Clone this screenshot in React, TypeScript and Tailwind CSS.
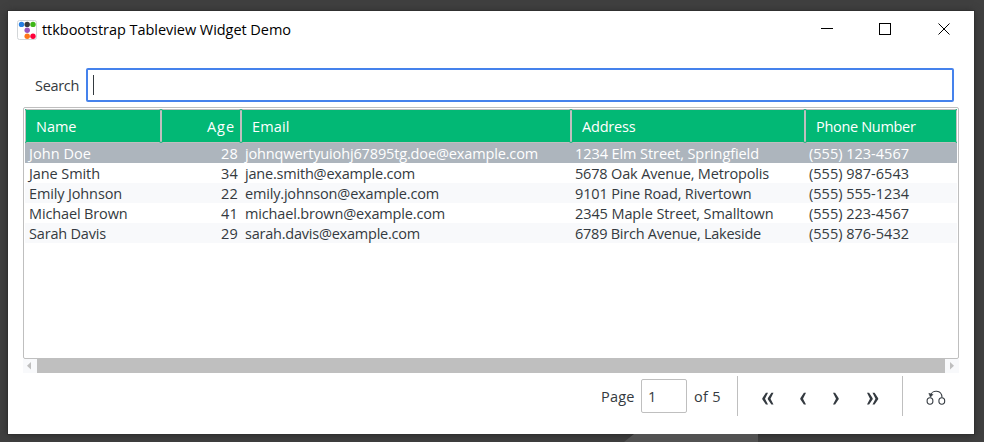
import { useLayoutEffect, useRef, useState } from "react";

type TextProps = { children: string; width: number; className?: string };

// Text tracked so that its advance fills the given width.
function Label({ children, width, className = "" }: TextProps) {
  const ref = useRef<HTMLSpanElement>(null);
  const [spacing, setSpacing] = useState(0);
  useLayoutEffect(() => {
    if (ref.current) {
      const natural = ref.current.getBoundingClientRect().width;
      setSpacing((width - natural) / children.length);
    }
  }, [children, width]);
  return (
    <span ref={ref} className={`inline-block whitespace-pre ${className}`} style={{ letterSpacing: spacing }}>
      {children}
    </span>
  );
}

type Cell = [string, number];

const rows: Cell[][] = [
  [["John Doe", 62], ["28", 17], ["johnqwertyuiohj67895tg.doe@example.com", 293], ["1234 Elm Street, Springfield", 184], ["(555) 123-4567", 100]],
  [["Jane Smith", 71], ["34", 17], ["jane.smith@example.com", 170], ["5678 Oak Avenue, Metropolis", 194], ["(555) 987-6543", 100]],
  [["Emily Johnson", 93], ["22", 17], ["emily.johnson@example.com", 194], ["9101 Pine Road, Rivertown", 176.5], ["(555) 555-1234", 100]],
  [["Michael Brown", 98.5], ["41", 17], ["michael.brown@example.com", 200], ["2345 Maple Street, Smalltown", 198.5], ["(555) 223-4567", 100]],
  [["Sarah Davis", 77], ["29", 17], ["sarah.davis@example.com", 175], ["6789 Birch Avenue, Lakeside", 186], ["(555) 876-5432", 100]],
];

const headers: Cell[] = [["Name", 40.5], ["Age", 28], ["Email", 37.5], ["Address", 53.5], ["Phone Number", 99.5]];

const columns = "grid grid-cols-[136px_80px_330px_234px_152px]";

function AppIcon() {
  return (
    <svg width="20" height="20" viewBox="0 0 20 20">
      <rect x="0.5" y="0.5" width="19" height="19" rx="2" fill="#fff" stroke="#d3d6d8" />
      <circle cx="4.5" cy="4.4" r="2.7" fill="#2780e3" />
      <circle cx="10.2" cy="4.4" r="2.7" fill="#373a3c" />
      <circle cx="16" cy="4.4" r="2.7" fill="#3fb618" />
      <circle cx="10.2" cy="10.3" r="2.7" fill="#9954bb" />
      <circle cx="10.2" cy="16.2" r="2.7" fill="#ff7518" />
      <circle cx="16" cy="16.2" r="2.7" fill="#ff0039" />
    </svg>
  );
}

function Chevron({ kind }: { kind: "first" | "prev" | "next" | "last" }) {
  const left = "M3.9 0.8 H6 L3 6.7 L6 12.6 H3.9 L0.3 7.2 V6.2 Z";
  const right = "M2.1 0.8 H0 L3 6.7 L0 12.6 H2.1 L5.7 7.2 V6.2 Z";
  const d = kind === "first" || kind === "prev" ? left : right;
  const twice = kind === "first" || kind === "last";
  return (
    <svg width={twice ? 12 : 6} height="13" viewBox={twice ? "0 0 12 13" : "0 0 6 13"} fill="#343a40">
      <path d={d} />
      {twice && <path d={d} transform="translate(5.5 0)" />}
    </svg>
  );
}

export default function App() {
  return (
    <div className="relative h-[442px] w-[984px] overflow-hidden bg-[#404040] px-2 pt-[11px] font-['Open_Sans','Noto_Sans',sans-serif] text-[14.5px] leading-5 text-[#343a40]">
      <svg className="absolute bottom-0 left-[624px]" width="136" height="8">
        <path d="M0 8 L10 0 H134 V8 Z" fill="#525252" />
      </svg>
      <div className="h-[423px] w-[966px] bg-white shadow-[0_0_0_1px_#303030,0_1px_8px_#282828]">
        <header className="flex h-[57px] items-start pl-[9px] text-black">
          <div className="flex h-[37px] items-center gap-[5px]">
            <AppIcon />
            <Label width={249}>ttkbootstrap Tableview Widget Demo</Label>
          </div>
          <svg className="ml-auto mr-[23px] mt-[12px]" width="130" height="12" fill="none" stroke="#000" shapeRendering="crispEdges">
            <path d="M0 5.5 H12" />
            <rect x="58.5" y="0.5" width="11" height="11" />
            <path d="M117.5 0.5 L128.5 11.5 M128.5 0.5 L117.5 11.5" shapeRendering="auto" />
          </svg>
        </header>

        <div className="flex h-[34px] items-center pl-[27px]">
          <div className="w-[51px] pt-0.5"><Label width={44}>Search</Label></div>
          <div className="flex h-[34px] w-[868px] items-center rounded-[2px] border-2 border-[#4582ec] pl-[5px]">
            <span className="h-5 w-px bg-[#343a40]" />
          </div>
        </div>

        <div className="ml-[15px] mt-[5px] h-[252px] w-[936px] rounded-[2px] border border-[#bfbfbf] px-px pt-px">
          <div className={`${columns} h-[34px] w-[932px] bg-[#02b875] text-white`}>
            {headers.map(([text, width], i) => (
              <div
                key={text}
                className={`flex items-center rounded-[1.5px] border border-[#bfbfbf] pt-0.5 ${i === 1 ? "justify-end pr-[5px]" : "pl-[10px]"}`}
              >
                <Label width={width}>{text}</Label>
              </div>
            ))}
          </div>
          {rows.map((row, r) => (
            <div
              key={row[0][0]}
              className={`${columns} h-5 w-[932px] ${r === 0 ? "bg-[#adb5bd] text-white" : r % 2 === 0 ? "bg-[#f8f9fb]" : ""}`}
            >
              {row.map(([text, width], c) => (
                <div key={c} className={`flex h-5 items-center pt-0.5 ${c === 1 ? "justify-end pr-[3px]" : "pl-1"}`}>
                  <Label width={width}>{text}</Label>
                </div>
              ))}
            </div>
          ))}
        </div>

        <div className="ml-[15px] flex h-[14px] w-[936px] bg-[#f8f9fb]">
          <svg width="14" height="14" fill="#bfbfbf"><path d="M8 3 V10.5 L4 6.8 Z" /></svg>
          <div className="-mt-px h-[15px] flex-1 bg-[#bfbfbf]" />
          <svg width="14" height="14" fill="#bfbfbf"><path d="M5 3 V10.5 L9 6.8 Z" /></svg>
        </div>

        <div className="mt-[3px] flex h-10 items-center pl-[593px]">
          <div className="w-10 pt-0.5"><Label width={33.5}>Page</Label></div>
          <div className="flex h-[34px] w-[46px] items-center rounded-[2px] border border-[#bfbfbf] pl-1.5 pt-0.5">1</div>
          <div className="w-[50px] pl-[7px] pt-0.5"><Label width={27}>of 5</Label></div>
          <div className="h-10 w-px bg-[#bfbfbf]" />
          <div className="flex w-[164px] items-center pl-6 pt-[5px]">
            <div className="w-[38px]"><Chevron kind="first" /></div>
            <div className="w-[33px]"><Chevron kind="prev" /></div>
            <div className="w-[34px]"><Chevron kind="next" /></div>
            <Chevron kind="last" />
          </div>
          <div className="h-10 w-px bg-[#bfbfbf]" />
          <svg className="ml-[23px] mt-[3px]" width="20" height="15" viewBox="0 0 20 15" fill="none" stroke="#343a40" strokeWidth="1.1">
            <ellipse cx="4" cy="11" rx="2.9" ry="3.2" />
            <ellipse cx="15.8" cy="11" rx="2.9" ry="3.2" />
            <path d="M5 5 C5.5 0 15.8 -0.8 16 7.5" />
            <path d="M2.8 3.3 L7 4.5 L4.4 7.2 Z" fill="#343a40" strokeWidth="0.5" />
          </svg>
        </div>
      </div>
    </div>
  );
}
